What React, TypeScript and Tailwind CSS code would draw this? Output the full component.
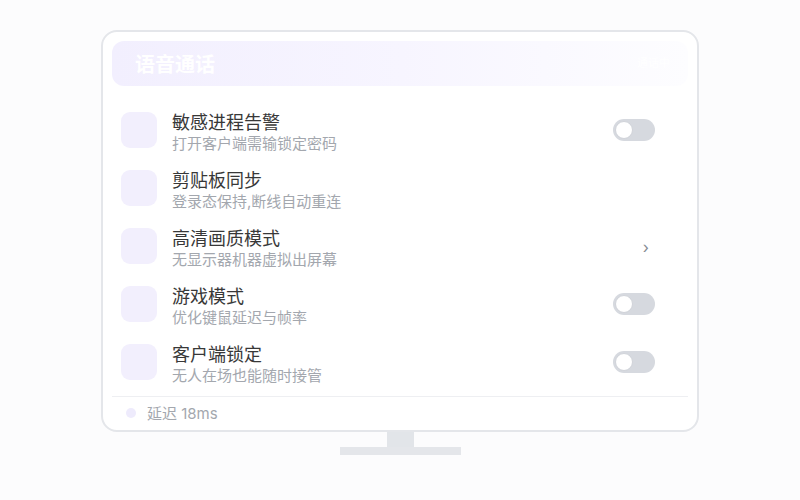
import React from 'react';

const rows = [
  { title: '敏感进程告警', sub: '打开客户端需输锁定密码', action: 'toggle' },
  { title: '剪贴板同步', sub: '登录态保持,断线自动重连', action: 'none' },
  { title: '高清画质模式', sub: '无显示器机器虚拟出屏幕', action: 'chevron' },
  { title: '游戏模式', sub: '优化键鼠延迟与帧率', action: 'toggle' },
  { title: '客户端锁定', sub: '无人在场也能随时接管', action: 'toggle' },
];

const Toggle = () => (
  <div className="w-[42px] h-[22px] rounded-full bg-[#d6d9df] p-[2px] flex items-center">
    <div className="w-[18px] h-[18px] rounded-full bg-white border border-[#d0d3d9]" />
  </div>
);

const App = () => {
  return (
    <div
      className="w-[800px] h-[500px] bg-[#fcfcfd] flex flex-col items-center pt-[30px]"
      style={{ fontFamily: 'Inter, "Noto Sans CJK SC", sans-serif' }}
    >
      {/* screen */}
      <div className="w-[598px] h-[402px] rounded-[16px] border-2 border-[#e4e6ea] bg-white pt-[9px] px-[9px] flex flex-col">
        <div className="h-[45px] rounded-[12px] bg-linear-to-r from-[#f2effe] via-[#f7f5ff] to-[#fdfdff] flex items-center justify-between pl-[23px] pr-[18px]">
          <span className="text-[20px] font-bold text-white leading-none mt-[2px]">语音通话</span>
          <span className="text-[11px] text-white leading-none">通话中</span>
        </div>

        <div className="mt-[18px] flex flex-col">
          {rows.map((r) => (
            <div key={r.title} className="h-[58px] flex items-start pl-[9px] pr-[33px]">
              <div className="w-[36px] h-[36px] rounded-[9px] bg-[#f2effd] mt-[8px]" />
              <div className="ml-[15px] flex flex-col">
                <span className="text-[18px] leading-[22px] text-[#383838] mt-[8px]">{r.title}</span>
                <span className="text-[15px] leading-[18px] text-[#a3a7ae] mt-[1px]">{r.sub}</span>
              </div>
              <div className="ml-auto h-[52px] flex items-center">
                {r.action === 'toggle' && <Toggle />}
                {r.action === 'chevron' && (
                  <span className="text-[16px] leading-none text-[#868b93] mr-[6px] mt-[2px]">›</span>
                )}
              </div>
            </div>
          ))}
        </div>

        <div className="mt-[2px] border-t border-[#eeeff2] h-[33px] flex items-center pl-[14px] gap-[11px]">
          <div className="w-[10px] h-[10px] rounded-full bg-[#eeebfc]" />
          <span className="text-[15px] text-[#a3a7ae] leading-none">延迟 18ms</span>
        </div>
      </div>

      {/* stand */}
      <div className="w-[27px] h-[15px] bg-[#e2e5e9]" />
      <div className="w-[121px] h-[8px] bg-[#e4e6ea]" />
    </div>
  );
};

export default App;
